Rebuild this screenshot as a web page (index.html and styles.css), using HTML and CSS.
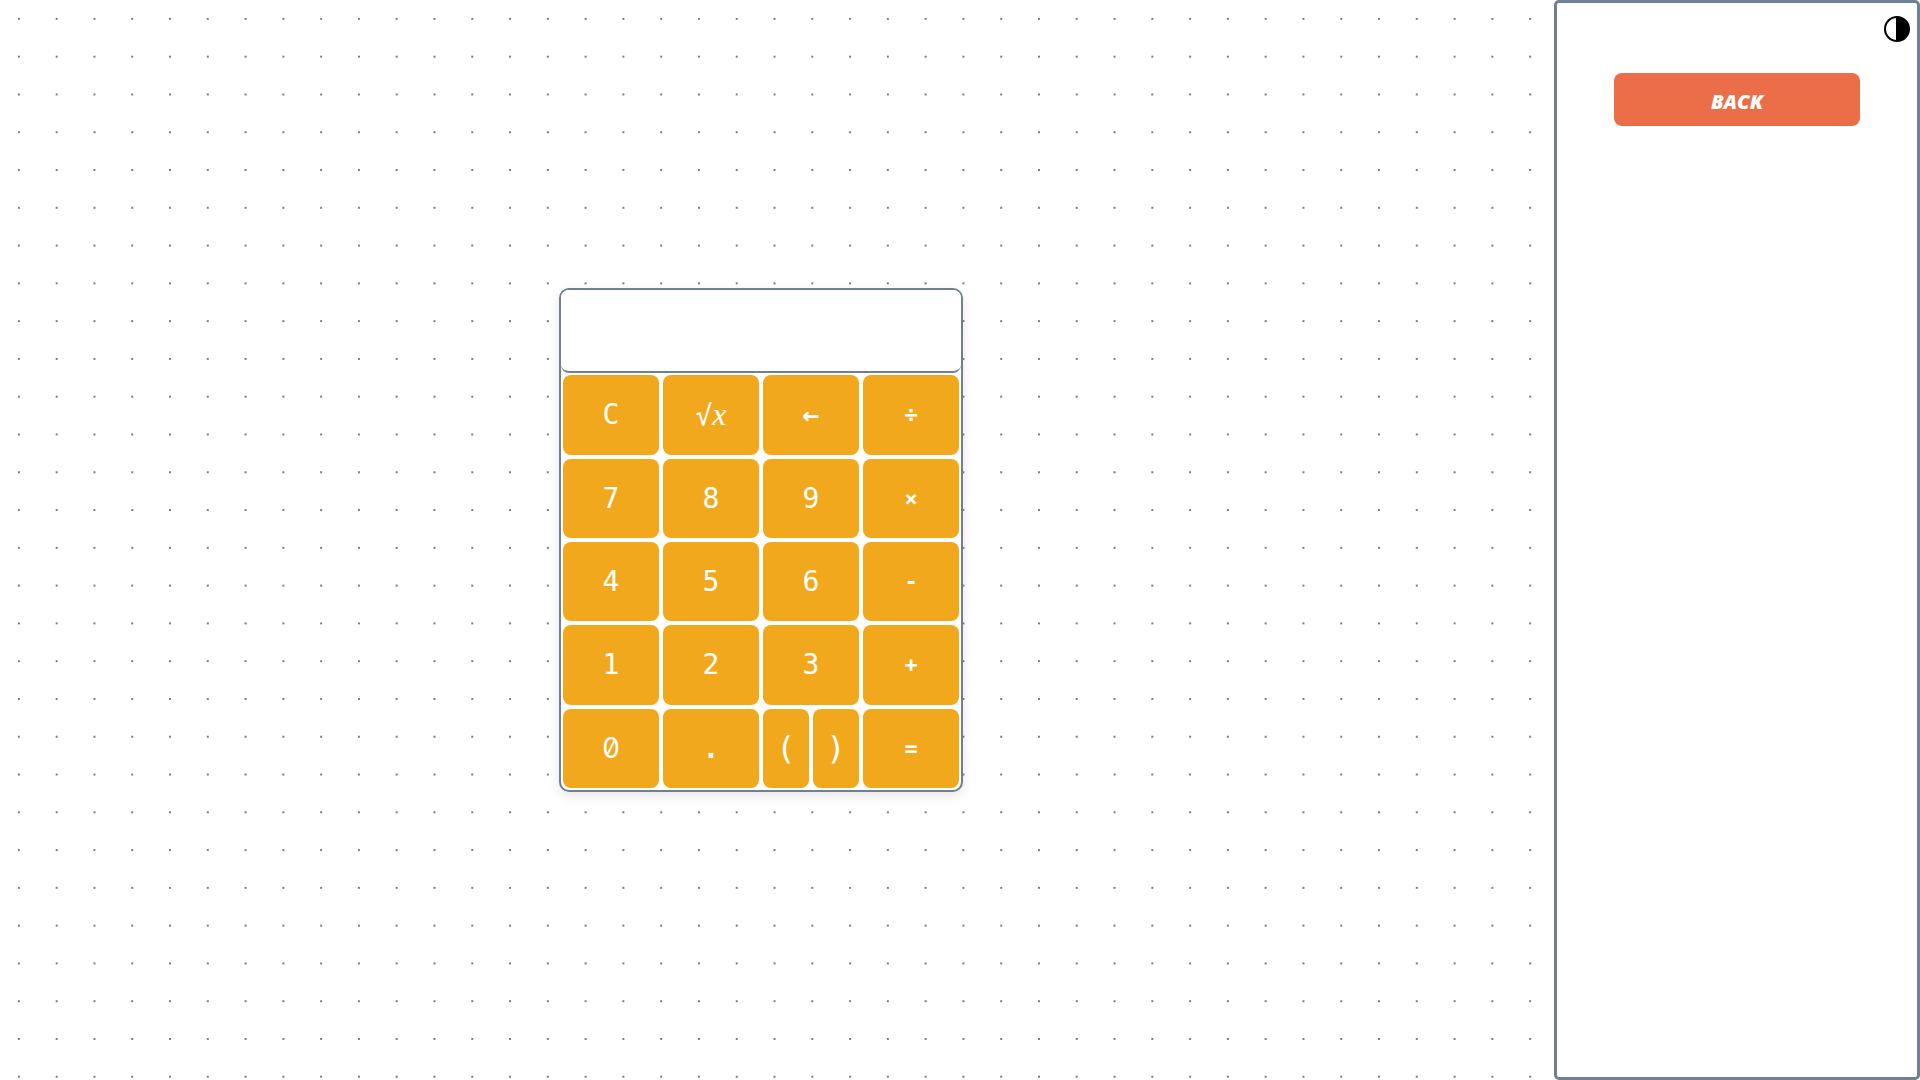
FILE: index.html
```html
<!DOCTYPE html>
<html lang="en">
<head>
<meta charset="utf-8">
<title>Calculator</title>
<link rel="stylesheet" href="styles.css">
</head>
<body>
<main class="stage">
  <div class="calculator">
    <input class="display" type="text" aria-label="Result" readonly>
    <button class="key" type="button">C</button>
    <button class="key" type="button">√<span class="variable">x</span></button>
    <button class="key operator arrow" type="button">←</button>
    <button class="key operator" type="button">÷</button>
    <button class="key" type="button">7</button>
    <button class="key" type="button">8</button>
    <button class="key" type="button">9</button>
    <button class="key operator" type="button">×</button>
    <button class="key" type="button">4</button>
    <button class="key" type="button">5</button>
    <button class="key" type="button">6</button>
    <button class="key operator" type="button">-</button>
    <button class="key" type="button">1</button>
    <button class="key" type="button">2</button>
    <button class="key" type="button">3</button>
    <button class="key operator" type="button">+</button>
    <button class="key zero" type="button">0</button>
    <button class="key point" type="button">.</button>
    <div class="brackets">
      <button class="key bracket" type="button">(</button>
      <button class="key bracket" type="button">)</button>
    </div>
    <button class="key operator" type="button">=</button>
  </div>
</main>
<aside class="panel">
  <button class="theme" type="button" aria-label="Toggle theme">
    <svg viewBox="0 0 26 26" width="26" height="26" aria-hidden="true">
      <circle cx="13" cy="13" r="12" fill="none" stroke="#000" stroke-width="2"/>
      <path d="M12 1h1a12 12 0 0 1 0 24h-1z"/>
    </svg>
  </button>
  <button class="back" type="button">BACK</button>
</aside>
</body>
</html>
```
FILE: styles.css
```css
* {
  box-sizing: border-box;
}

body {
  display: flex;
  gap: 32px;
  min-height: 100vh;
  margin: 0;
  background: #fff radial-gradient(slategray 1px, transparent 0) 0 0 / 1cm 1cm;
}

button {
  border: 0;
  cursor: pointer;
}

.stage {
  display: flex;
  flex: 1;
  align-items: center;
  justify-content: center;
}

.calculator {
  display: grid;
  grid-template-columns: repeat(4, 100px);
  grid-template-rows: repeat(6, 1fr);
  height: 504px;
  border: 2px solid slategray;
  border-radius: 10px;
  background: #fff;
  box-shadow: 0 4px 12px rgba(0, 0, 0, 0.1);
}

.display {
  grid-column: 1 / -1;
  min-width: 0;
  padding: 0 16px;
  border: 0;
  border-bottom: 2px solid slategray;
  border-radius: 8px;
  background: #fff;
  font: 32px "DejaVu Sans Mono", monospace;
  text-align: right;
  outline: 0;
}

.key {
  margin: 2px;
  padding: 0;
  border-radius: 8px;
  background: #f2a81d;
  color: #fff;
  font: 28px "DejaVu Sans Mono", monospace;
}

.operator {
  font-size: 22px;
  font-weight: 700;
}

.arrow {
  font-size: 28px;
}

.point {
  font-weight: 700;
}

.bracket {
  font-size: 32px;
}

.zero {
  font-family: Inter, sans-serif;
  font-feature-settings: "zero";
}

.variable {
  font-family: "Liberation Serif", serif;
  font-size: 32px;
  font-style: italic;
}

.brackets {
  display: grid;
  grid-template-columns: 1fr 1fr;
}

.panel {
  display: flex;
  flex: 0 0 366px;
  flex-direction: column;
  align-items: center;
  padding: 13px 7px;
  border: 3px solid slategray;
  border-radius: 5px;
  background: #fff;
}

.theme {
  display: flex;
  align-self: flex-end;
  padding: 0;
  background: none;
}

.back {
  width: 246px;
  height: 53px;
  margin-top: 31px;
  padding: 4px 0 0;
  border-radius: 8px;
  background: #eb6e48;
  color: #fff;
  font: italic 800 20px "Open Sans", sans-serif;
}
```
